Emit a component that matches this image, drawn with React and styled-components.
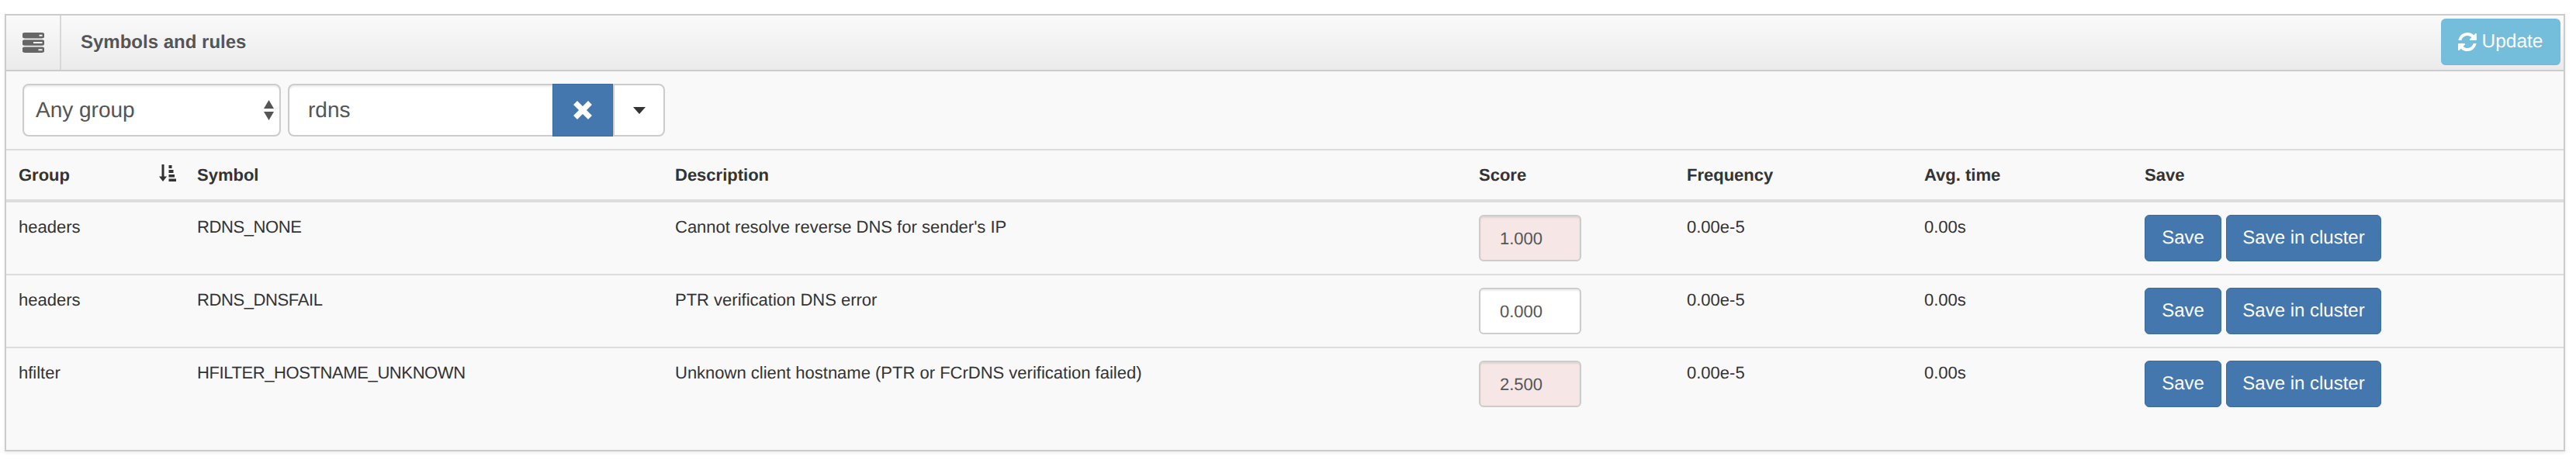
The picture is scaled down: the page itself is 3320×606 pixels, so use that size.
import React from "react";
import styled, { createGlobalStyle } from "styled-components";

const Global = createGlobalStyle`
  html, body { margin: 0; padding: 0; background: #fff; }
  body { font-family: "Liberation Sans", Arial, sans-serif; font-size: 22px; line-height: 1.42857; color: #333; text-rendering: geometricPrecision; }
  button { text-rendering: geometricPrecision; }
  * { box-sizing: border-box; }
`;
const Page = styled.div`padding: 18px 14px 24px 6px;`;
const Panel = styled.section`
  border: 2px solid #ccc; background: #f9f9f9; box-shadow: 0 2px 4px rgba(0,0,0,.08);
`;
const Header = styled.header`
  height: 72px; display: flex; align-items: stretch; border-bottom: 2px solid #ccc;
  background: linear-gradient(to bottom, #fafafa, #ebebeb);
`;
const IconCell = styled.div`
  width: 71px; display: flex; align-items: center; justify-content: center; padding-left: 1px;
  border-right: 2px solid #d8d8d8; color: #666;
`;
const Title = styled.h5`
  margin: 0; flex: 1; padding-left: 25px; font-size: 24px; font-weight: 700; color: #555;
  line-height: 70px; text-shadow: 0 1px 0 #fff;
`;
const UpdateButton = styled.button`
  align-self: flex-start; margin: 4px 4px 0 0; width: 154px; height: 60px; padding: 0;
  display: flex; align-items: center; justify-content: center; gap: 6px;
  border: 0; border-bottom: 1px solid #6fb8d6; border-radius: 6px; background: #74bddb; color: #fff;
  font: 400 24.5px "Liberation Sans", Arial, sans-serif;
`;
const Toolbar = styled.div`
  height: 102px; padding: 16px 0 0 21px; display: flex; gap: 9px; border-bottom: 2px solid #ddd;
`;
const SelectBox = styled.div`
  width: 333px; height: 68px; position: relative; padding-left: 15px;
  display: flex; align-items: center; font-size: 28px; color: #555; background: #fff;
  border: 2px solid #ccc; border-radius: 8px; box-shadow: inset 0 2px 2px rgba(0,0,0,.075);
`;
const Carets = styled.svg`position: absolute; right: 7px; top: 19px;`;
const SearchGroup = styled.div`display: flex; height: 68px;`;
const SearchInput = styled.div`
  width: 341px; padding-left: 24px; display: flex; align-items: center; font-size: 28px; color: #555;
  background: #fff; border: 2px solid #ccc; border-right: 0; border-radius: 8px 0 0 8px;
  box-shadow: inset 0 2px 2px rgba(0,0,0,.075);
`;
const ClearButton = styled.button`
  width: 78px; padding: 0; border: 1px solid #3c6c9f; background: #4477ae; color: #fff; display: flex;
  align-items: center; justify-content: center;
`;
const MenuButton = styled.button`
  width: 67px; padding: 0; border: 2px solid #ccc; border-radius: 0 8px 8px 0; background: #fff;
  display: flex; align-items: center; justify-content: center;
`;
const Table = styled.table`
  width: 100%; border-collapse: collapse; table-layout: fixed; font-size: 22px;
`;
const Th = styled.th`
  position: relative; text-align: left; font-weight: 700; padding: 16px; height: 62px;
  border-bottom: 4px solid #ddd;
`;
const SortIcon = styled.svg`position: absolute; left: 197px; top: 18px;`;
const Td = styled.td`padding: 16px; vertical-align: top; height: 92px;`;
const SymbolCell = styled(Td)`letter-spacing: -0.4px;`;
const Row = styled.tr`border-bottom: ${p => p.$last ? "0" : "2px solid #ddd"}; ${p => p.$last ? "height: 132px;" : ""}`;
const ScoreBox = styled.div`
  width: 132px; height: 60px; padding-left: 25px; display: flex; align-items: center; font-size: 22px; color: #555;
  background: ${p => p.$warn ? "#f6e6e6" : "#fff"}; border: 2px solid #ccc; border-radius: 6px;
  box-shadow: inset 0 2px 2px rgba(0,0,0,.075);
`;
const Actions = styled.div`display: flex; gap: 6px;`;
const ActionButton = styled.button`
  width: ${p => p.$w}px; height: 60px; padding: 0; border: 1px solid #3c6c9f; border-radius: 6px;
  background: #4477ae; color: #fff; font: 400 24px "Liberation Sans", Arial, sans-serif;
`;

const rows = [
  { g: "headers", s: "RDNS_NONE", d: "Cannot resolve reverse DNS for sender's IP", v: "1.000", warn: true },
  { g: "headers", s: "RDNS_DNSFAIL", d: "PTR verification DNS error", v: "0.000" },
  { g: "hfilter", s: "HFILTER_HOSTNAME_UNKNOWN", d: "Unknown client hostname (PTR or FCrDNS verification failed)", v: "2.500", warn: true },
];

const TasksIcon = () => (
  <svg width="28" height="26" viewBox="0 0 28 26" fill="currentColor">
    <path fillRule="evenodd" d="M3 0h22a3 3 0 0 1 0 7.500H3a3 3 0 0 1 0-7.500zm18.500 2.800v1.900h4v-1.900z" />
    <path fillRule="evenodd" d="M3 9.300h22a3 3 0 0 1 0 7.400H3a3 3 0 0 1 0-7.400zm11 2.700v1.900h11.500v-1.900z" />
    <path fillRule="evenodd" d="M3 18.500h22a3 3 0 0 1 0 7.500H3a3 3 0 0 1 0-7.500zm17.500 2.800v1.900h5v-1.900z" />
  </svg>
);
const RefreshIcon = () => (
  <svg width="24" height="24" viewBox="0 0 1536 1536" fill="currentColor">
    <path d="M1511 928q0 5-1 7-64 268-268 434.500T764 1536q-146 0-282.500-55T238 1324l-129 129q-19 19-45 19t-45-19-19-45V960q0-26 19-45t45-19h448q26 0 45 19t19 45-19 45l-137 137q71 66 161 102t187 36q134 0 250-65t186-179q11-17 53-117 8-23 30-23h192q13 0 22.500 9.500t9.500 22.500zM1536 128v448q0 26-19 45t-45 19h-448q-26 0-45-19t-19-45 19-45l138-138Q969 256 768 256q-134 0-250 65T332 500q-11 17-53 117-8 23-30 23H50q-13 0-22.500-9.500T18 608v-7q65-268 270-434.500T768 0q146 0 284 55.500T1297 212l130-129q19-19 45-19t45 19 19 45z" />
  </svg>
);
const CloseIcon = () => (
  <svg width="24" height="24" viewBox="0 0 24 24" fill="none" stroke="#fff" strokeWidth="7" strokeLinecap="square">
    <path d="M5 5l14 14M19 5L5 19" />
  </svg>
);

export default function App() {
  return (
    <Page>
      <Global />
      <Panel>
        <Header>
          <IconCell><TasksIcon /></IconCell>
          <Title>Symbols and rules</Title>
          <UpdateButton><RefreshIcon />Update</UpdateButton>
        </Header>
        <Toolbar>
          <SelectBox>
            Any group
            <Carets width="13" height="26" viewBox="0 0 13 26" fill="#555"><path d="M6.500 0L13 11H0zM6.500 26L0 15h13z" /></Carets>
          </SelectBox>
          <SearchGroup>
            <SearchInput>rdns</SearchInput>
            <ClearButton><CloseIcon /></ClearButton>
            <MenuButton><svg width="16" height="9" viewBox="0 0 16 9" fill="#333"><path d="M0 0h16L8 9z" /></svg></MenuButton>
          </SearchGroup>
        </Toolbar>
        <Table>
          <colgroup>
            <col style={{ width: 230 }} /><col style={{ width: 616 }} /><col style={{ width: 1036 }} />
            <col style={{ width: 268 }} /><col style={{ width: 306 }} /><col style={{ width: 284 }} /><col />
          </colgroup>
          <thead>
            <tr>
              <Th>Group
                <SortIcon width="22" height="22" viewBox="0 0 22 22" fill="#333">
                  <path d="M3.500 0h3v15.500H10L5 22 0 15.500h3.500zM12.500 1h4v4h-4zM12.500 7h6v4h-6zM12.500 13h7.500v3.500h-7.500zM12.500 18.500H22V22h-9.500z" />
                </SortIcon>
              </Th>
              <Th>Symbol</Th><Th>Description</Th><Th>Score</Th><Th>Frequency</Th><Th>Avg. time</Th><Th>Save</Th>
            </tr>
          </thead>
          <tbody>
            {rows.map((r, i) => (
              <Row key={r.s} $last={i === rows.length - 1}>
                <Td>{r.g}</Td><SymbolCell>{r.s}</SymbolCell><Td>{r.d}</Td>
                <Td><ScoreBox $warn={r.warn}>{r.v}</ScoreBox></Td>
                <Td>0.00e-5</Td><Td>0.00s</Td>
                <Td><Actions><ActionButton $w={99}>Save</ActionButton><ActionButton $w={200}>Save in cluster</ActionButton></Actions></Td>
              </Row>
            ))}
          </tbody>
        </Table>
      </Panel>
    </Page>
  );
}
